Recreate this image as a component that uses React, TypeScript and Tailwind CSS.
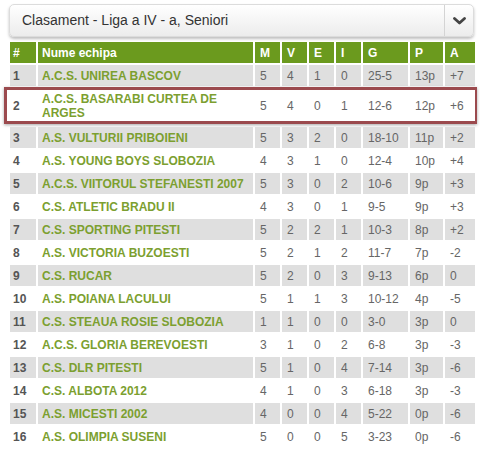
import React from "react";

type Row = [number, string, string, string, string, string, string, string, string];

const rows: Row[] = [
  [1, "A.C.S. UNIREA BASCOV", "5", "4", "1", "0", "25-5", "13p", "+7"],
  [2, "A.C.S. BASARABI CURTEA DE ARGES", "5", "4", "0", "1", "12-6", "12p", "+6"],
  [3, "A.S. VULTURII PRIBOIENI", "5", "3", "2", "0", "18-10", "11p", "+2"],
  [4, "A.S. YOUNG BOYS SLOBOZIA", "4", "3", "1", "0", "12-4", "10p", "+4"],
  [5, "A.C.S. VIITORUL STEFANESTI 2007", "5", "3", "0", "2", "10-6", "9p", "+3"],
  [6, "C.S. ATLETIC BRADU II", "4", "3", "0", "1", "9-5", "9p", "+3"],
  [7, "C.S. SPORTING PITESTI", "5", "2", "2", "1", "10-3", "8p", "+2"],
  [8, "A.S. VICTORIA BUZOESTI", "5", "2", "1", "2", "11-7", "7p", "-2"],
  [9, "C.S. RUCAR", "5", "2", "0", "3", "9-13", "6p", "0"],
  [10, "A.S. POIANA LACULUI", "5", "1", "1", "3", "10-12", "4p", "-5"],
  [11, "C.S. STEAUA ROSIE SLOBOZIA", "1", "1", "0", "0", "3-0", "3p", "0"],
  [12, "A.C.S. GLORIA BEREVOESTI", "3", "1", "0", "2", "6-8", "3p", "-3"],
  [13, "C.S. DLR PITESTI", "5", "1", "0", "4", "7-14", "3p", "-6"],
  [14, "C.S. ALBOTA 2012", "4", "1", "0", "3", "6-18", "3p", "-3"],
  [15, "A.S. MICESTI 2002", "4", "0", "0", "4", "5-22", "0p", "-6"],
  [16, "A.S. OLIMPIA SUSENI", "5", "0", "0", "5", "3-23", "0p", "-6"],
];

// column widths, 2px white gap between cells
const widths = ["w-[26px]", "w-[215px]", "w-[25px]", "w-[25px]", "w-[25px]", "w-[25px]", "w-[45px]", "w-[33px]", "w-[30px]"];

function Cells({ row, bg, tall }: { row: Row; bg: string; tall?: boolean }) {
  const h = tall ? "h-[31px]" : "h-[21px]";
  return (
    <div className="flex gap-[2px]">
      {row.map((v, i) => (
        <div
          key={i}
          className={`${widths[i]} ${h} ${bg} shrink-0 flex items-center ${
            i === 0
              ? "pl-[3px] font-bold text-[#555]"
              : i === 1
              ? "pl-[4px] font-bold text-[#7c9f30] leading-[14px]"
              : "pl-[5px] text-[#666]"
          }`}
        >
          {v}
        </div>
      ))}
    </div>
  );
}

export default function App() {
  return (
    <div className="w-[480px] h-[449px] overflow-hidden bg-white font-['Liberation_Sans',Arial,sans-serif] text-[12px]">
      {/* Title bar */}
      <div className="pt-[4px] pl-[9px]">
        <div className="w-[465px] h-[33px] flex items-stretch rounded-[5px] border border-[#dcdcdc] bg-gradient-to-b from-white to-[#ececec] shadow-[0_2px_3px_rgba(0,0,0,0.25)]">
          <div className="flex-1 flex items-center pl-[12px] text-[14px] text-[#333]">
            Clasament - Liga a IV - a, Seniori
          </div>
          <div className="w-[29px] border-l border-[#d4d4d4] flex items-center justify-center">
            <svg width="13" height="8" viewBox="0 0 13 8">
              <path d="M1.5 1.5 L6.5 6 L11.5 1.5" fill="none" stroke="#444" strokeWidth="2.8" strokeLinecap="round" strokeLinejoin="round" />
            </svg>
          </div>
        </div>
      </div>

      {/* Table */}
      <div className="mt-[5px] ml-[10px] w-[465px] flex flex-col gap-[2px]">
        <div className="flex gap-[2px]">
          {["#", "Nume echipa", "M", "V", "E", "I", "G", "P", "A"].map((h, i) => (
            <div
              key={h}
              className={`${widths[i]} h-[21px] shrink-0 bg-[#6b9a1e] flex items-center font-bold text-white ${
                i === 0 ? "pl-[3px]" : i === 1 ? "pl-[4px]" : "pl-[5px]"
              }`}
            >
              {h}
            </div>
          ))}
        </div>
        {rows.map((r, idx) =>
          r[0] === 2 ? (
            <div
              key={r[0]}
              className="-ml-[6px] -mt-[1px] mb-[1px] w-[473px] border-[3px] border-[#9b4a4e] pl-[3px] bg-white shadow-[0_1px_3px_rgba(0,0,0,0.35)]"
            >
              <Cells row={r} bg="bg-white" tall />
            </div>
          ) : (
            <Cells key={r[0]} row={r} bg={idx % 2 === 0 ? "bg-[#dfdfdf]" : "bg-white"} />
          )
        )}
      </div>
    </div>
  );
}
